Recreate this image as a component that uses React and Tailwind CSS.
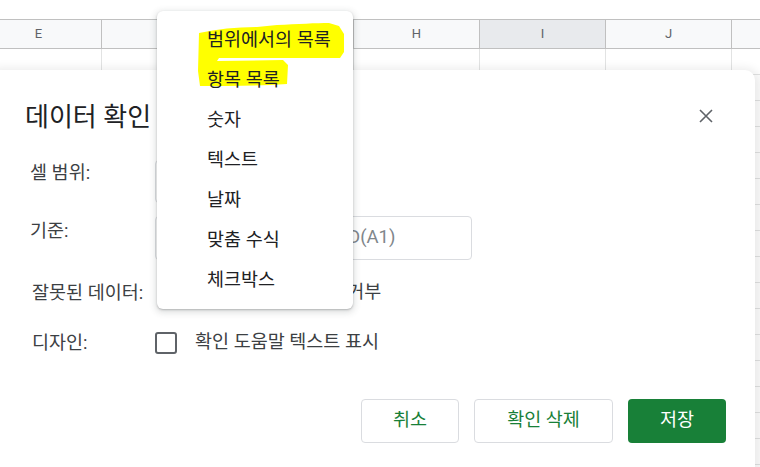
import React from "react";

const cols = ["E", "F", "G", "H", "I", "J", "K"];

function Grid() {
  return (
    <div className="flex flex-col">
      <div className="h-[19px] bg-white" />
      <div className="flex h-[30px] ml-[-24px] border-y border-[#c0c0c0] bg-[#f8f9fa]">
        {cols.map((c) => (
          <div
            key={c}
            className={
              "w-[126px] shrink-0 border-r border-[#c0c0c0] flex items-center justify-center text-[13px] text-[#5f6368] " +
              (c === "I" ? "bg-[#e8eaed]" : "")
            }
          >
            {c}
          </div>
        ))}
      </div>
      {Array.from({ length: 17 }).map((_, r) => (
        <div key={r} className="flex h-[26px] ml-[-24px] border-b border-[#e2e3e3]">
          {cols.map((c) => (
            <div key={c} className="w-[126px] shrink-0 border-r border-[#e2e3e3]" />
          ))}
        </div>
      ))}
    </div>
  );
}

function Radio() {
  return <div className="w-[20px] h-[20px] rounded-full border-2 border-[#5f6368] shrink-0" />;
}

const items = ["범위에서의 목록", "항목 목록", "숫자", "텍스트", "날짜", "맞춤 수식", "체크박스"];

export default function App() {
  return (
    <div
      className="relative w-[760px] h-[467px] overflow-hidden bg-white"
      style={{ fontFamily: 'Roboto, "Noto Sans CJK KR", sans-serif' }}
    >
      <Grid />

      {/* Dialog */}
      <div className="absolute left-0 top-[70px] w-[755px] h-[420px] bg-white rounded-tr-[10px] shadow-[0_4px_10px_6px_rgba(0,0,0,0.08)] flex flex-col pt-[31px]">
        <div className="flex items-center justify-between h-[32px] pl-[25px] pr-[42px]">
          <div className="text-[26px] leading-[32px] text-[#202124]">데이터 확인</div>
          <svg width="14" height="14" viewBox="0 0 14 14" className="mt-[-2px]">
            <path d="M1 1 L13 13 M13 1 L1 13" stroke="#5f6368" strokeWidth="1.6" fill="none" />
          </svg>
        </div>

        <div className="flex flex-col pl-[30px] text-[18.5px] text-[#3c4043]">
          {/* row 1 */}
          <div className="flex mt-[27px]">
            <div className="w-[125px] pt-[1px] leading-[24px]">셀 범위:</div>
            <div className="w-[180px] h-[43px] border border-[#dadce0] rounded-[4px]" />
          </div>
          {/* row 2 */}
          <div className="flex mt-[13px]">
            <div className="w-[125px] pt-[3px] leading-[24px]">기준:</div>
            <div className="w-[117px] h-[44px] border border-[#dadce0] rounded-[4px]" />
            <div className="ml-[12px] w-[188px] h-[44px] border border-[#dadce0] rounded-[4px] flex items-center pl-[12px] text-[#80868b]">
              =ISODD(A1)
            </div>
          </div>
          {/* row 3 */}
          <div className="flex mt-[21px] items-center h-[24px]">
            <div className="w-[130px] pl-[2px] leading-[24px]">잘못된 데이터:</div>
            <Radio />
            <div className="ml-[8px]">경고 표시</div>
            <div className="ml-[22px]"><Radio /></div>
            <div className="ml-[6px]">입력 거부</div>
          </div>
          {/* row 4 */}
          <div className="flex mt-[27px] items-center h-[22px]">
            <div className="w-[125px] pl-[2px] leading-[24px]">디자인:</div>
            <div className="w-[22px] h-[22px] border-2 border-[#5f6368] rounded-[3px] shrink-0" />
            <div className="ml-[18px]">확인 도움말 텍스트 표시</div>
          </div>
        </div>

        <div className="flex justify-end gap-[15px] pr-[29px] mt-[45px] text-[18.5px]">
          <div className="w-[98px] h-[44px] border border-[#dadce0] rounded-[4px] flex items-center justify-center text-[#188038]">
            취소
          </div>
          <div className="w-[139px] h-[44px] border border-[#dadce0] rounded-[4px] flex items-center justify-center text-[#188038]">
            확인 삭제
          </div>
          <div className="w-[98px] h-[44px] rounded-[4px] bg-[#188038] flex items-center justify-center text-white">
            저장
          </div>
        </div>
      </div>

      {/* Dropdown menu */}
      <div className="absolute left-[157px] top-[11px] w-[196px] h-[298px] bg-white rounded-[6px] shadow-[0_2px_6px_2px_rgba(60,64,67,0.15),0_1px_2px_rgba(60,64,67,0.3)] pt-[10px] pb-[8px]">
        <svg className="absolute left-0 top-0" width="196" height="298" viewBox="0 0 196 298">
          <path
            d="M42,22 C60,18 80,16 100,16 L120,14 C140,13 160,12 172,12 L182,15 L187,23 L187,41 L183,47 L62,47 L60,50 L126,49 L131,54 L130,73 C100,75 70,75 43,75 L41,60 Z"
            fill="#ffff00"
          />
        </svg>
        {items.map((t) => (
          <div key={t} className="relative h-[40px] flex items-center pl-[50px] text-[18.5px] text-[#202124]">
            {t}
          </div>
        ))}
      </div>
    </div>
  );
}
